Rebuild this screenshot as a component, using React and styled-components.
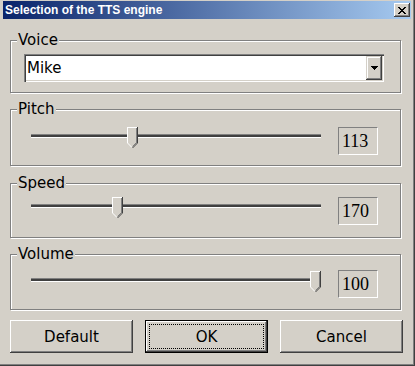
import React from 'react';
import styled, { createGlobalStyle } from 'styled-components';

const Global = createGlobalStyle`
  html, body { margin: 0; padding: 0; background: #d4d0c8; }
  body { width: 415px; height: 366px; overflow: hidden; }
`;

const Window = styled.div`
  box-sizing: border-box;
  width: 415px;
  height: 366px;
  background: #d4d0c8;
  padding: 1px 4px 4px 3px;
  box-shadow: inset -1px -1px #404040, inset -2px -2px #808080, inset 2px 0 #d4d0c8, inset 1px 0 #fff;
  display: flex;
  flex-direction: column;
  font-family: "DejaVu Sans", sans-serif;
`;

const TitleBar = styled.div`
  height: 18px;
  background: linear-gradient(to right, #0a246a, #a6caf0);
  display: flex;
  align-items: center;
  justify-content: space-between;
  padding: 0 1px 0 2px;
`;

const TitleText = styled.span`
  font-family: "Liberation Sans", Arial, sans-serif;
  font-weight: bold;
  font-size: 12px;
  color: #fff;
  line-height: 18px;
`;

const CloseButton = styled.div`
  width: 16px;
  height: 14px;
  background: #d4d0c8;
  box-shadow: inset -1px -1px #404040, inset 1px 1px #fff, inset -2px -2px #808080, inset 2px 2px #d4d0c8;
  display: flex;
  align-items: center;
  justify-content: center;
`;

const Content = styled.div`
  display: flex;
  flex-direction: column;
  padding: 0 10px 0 7px;
`;

const Group = styled.div`
  position: relative;
  border: 1px solid #808080;
  box-shadow: inset 1px 1px #fff, 1px 1px #fff;
  margin-top: ${(p) => p.$mt}px;
  padding: ${(p) => p.$pad};
`;

const Legend = styled.span`
  position: absolute;
  top: -9px;
  left: 6px;
  padding: 0 1px;
  background: #d4d0c8;
  font-size: 15px;
  line-height: 17px;
  color: #000;
`;

const Combo = styled.div`
  box-sizing: border-box;
  width: 360px;
  height: 28px;
  padding: 2px;
  background: #fff;
  box-shadow: inset 1px 1px #808080, inset 2px 2px #404040, inset -1px -1px #fff, inset -2px -2px #d4d0c8;
  display: flex;
  align-items: center;
`;

const ComboText = styled.span`
  flex: 1;
  padding-left: 1px;
  font-size: 15px;
  color: #000;
`;

const DropButton = styled.div`
  width: 16px;
  height: 24px;
  background: #d4d0c8;
  box-shadow: inset -1px -1px #404040, inset 1px 1px #d4d0c8, inset -2px -2px #808080, inset 2px 2px #fff;
  display: flex;
  align-items: center;
  justify-content: center;
`;

const SliderRow = styled.div`
  display: flex;
  align-items: flex-start;
`;

const SliderArea = styled.div`
  position: relative;
  width: 290px;
  height: 21px;
  margin-top: ${(p) => p.$offset || 0}px;
`;

const Track = styled.div`
  margin-top: 7px;
  height: 2px;
  background: #404040;
  border-top: 1px solid #808080;
  border-bottom: 1px solid #fff;
`;

const ThumbWrap = styled.div`
  position: absolute;
  top: 0;
  width: 11px;
  height: 21px;
`;

const ValueBox = styled.div`
  box-sizing: border-box;
  margin-left: 17px;
  width: 40px;
  height: 28px;
  border: 1px solid;
  border-color: #808080 #fff #fff #808080;
  padding-left: 3px;
  display: flex;
  align-items: center;
  font-family: "Liberation Serif", "Times New Roman", serif;
  font-size: 18px;
  color: #000;
`;

const ButtonRow = styled.div`
  display: flex;
  gap: 12px;
  margin-top: 10px;
  margin-right: -2px;
`;

const Button = styled.button`
  box-sizing: border-box;
  width: 123px;
  height: 33px;
  padding: 0;
  background: #d4d0c8;
  border: ${(p) => (p.$primary ? '1px solid #000' : 'none')};
  box-shadow: inset -1px -1px #404040, inset 1px 1px #fff, inset -2px -2px #808080, inset 2px 2px #d4d0c8;
  outline: ${(p) => (p.$primary ? '1px dotted #000' : 'none')};
  outline-offset: -5px;
  font-family: "DejaVu Sans", sans-serif;
  font-size: 15px;
  color: #000;
`;

const CloseGlyph = () => (
  <svg width="8" height="7" viewBox="0 0 8 7" shapeRendering="crispEdges">
    <path
      fill="#000"
      d="M0 0h2v1h-2zM6 0h2v1h-2zM1 1h2v1h-2zM5 1h2v1h-2zM2 2h4v1h-4zM3 3h2v1h-2zM2 4h4v1h-4zM1 5h2v1h-2zM5 5h2v1h-2zM0 6h2v1h-2zM6 6h2v1h-2z"
    />
  </svg>
);

const ArrowGlyph = () => (
  <svg width="7" height="4" viewBox="0 0 7 4" shapeRendering="crispEdges">
    <path fill="#000" d="M0 0h7v1h-7zM1 1h5v1h-5zM2 2h3v1h-3zM3 3h1v1h-1z" />
  </svg>
);

const Thumb = () => (
  <svg width="11" height="21" viewBox="0 0 11 21" shapeRendering="crispEdges">
    <polygon points="0,0 11,0 11,16 5.5,21 0,16" fill="#d4d0c8" />
    <path d="M0.5 16V0.5H10" stroke="#fff" fill="none" />
    <path d="M0.5 16L5 20.5" stroke="#fff" fill="none" shapeRendering="auto" />
    <path d="M10.5 0V16" stroke="#404040" fill="none" />
    <path d="M9.5 1V15.5" stroke="#808080" fill="none" />
    <path d="M10.5 16L5.5 21" stroke="#404040" fill="none" shapeRendering="auto" />
    <path d="M9.5 15.5L5.5 19.5" stroke="#808080" fill="none" shapeRendering="auto" />
  </svg>
);

const sliders = [
  { name: 'Pitch', value: 113, frac: 0.344, mt: 16, pad: '17px 20px 10px 20px', off: 0 },
  { name: 'Speed', value: 170, frac: 0.29, mt: 17, pad: '13px 20px 12px 20px', off: 0 },
  { name: 'Volume', value: 100, frac: 1, mt: 16, pad: '15px 20px 11px 20px', off: 1 },
];

export default function App() {
  return (
    <>
      <Global />
      <Window>
        <TitleBar>
          <TitleText>Selection of the TTS engine</TitleText>
          <CloseButton>
            <CloseGlyph />
          </CloseButton>
        </TitleBar>
        <Content>
          <Group $mt={21} $pad="13px 15px 10px 13px">
            <Legend>Voice</Legend>
            <Combo>
              <ComboText>Mike</ComboText>
              <DropButton>
                <ArrowGlyph />
              </DropButton>
            </Combo>
          </Group>
          {sliders.map((s) => (
            <Group key={s.name} $mt={s.mt} $pad={s.pad}>
              <Legend>{s.name}</Legend>
              <SliderRow>
                <SliderArea $offset={s.off}>
                  <Track />
                  <ThumbWrap style={{ left: `${Math.round(s.frac * 279)}px` }}>
                    <Thumb />
                  </ThumbWrap>
                </SliderArea>
                <ValueBox>{s.value}</ValueBox>
              </SliderRow>
            </Group>
          ))}
          <ButtonRow>
            <Button>Default</Button>
            <Button $primary>OK</Button>
            <Button>Cancel</Button>
          </ButtonRow>
        </Content>
      </Window>
    </>
  );
}
